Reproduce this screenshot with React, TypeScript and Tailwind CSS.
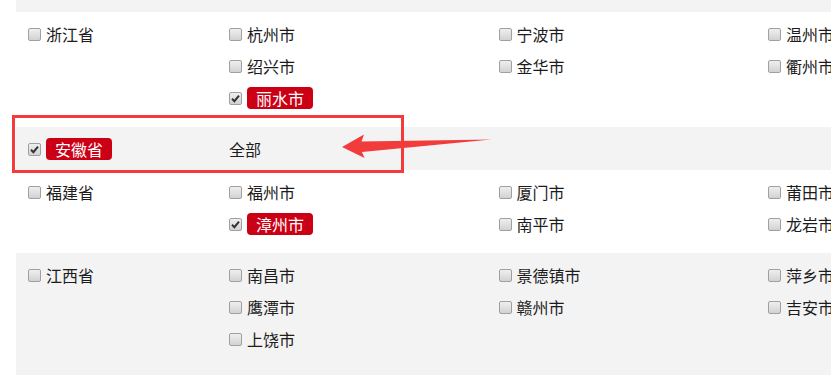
import React from 'react';

type City = { name: string; checked?: boolean };

interface ProvinceRowProps {
  name: string;
  checked?: boolean;
  cities?: City[];
  gray?: boolean;
  pad?: string;
}

const Box: React.FC<{ checked?: boolean }> = ({ checked }) => (
  <span className="w-[13px] h-[13px] shrink-0 rounded-[2px] border border-[#a0a0a0] bg-gradient-to-b from-[#efefef] to-[#d2d2d2] flex items-center justify-center">
    {checked && (
      <svg width="9" height="9" viewBox="0 0 9 9">
        <path d="M1 4.8 L3.4 7.2 L8 1.6" fill="none" stroke="#333" strokeWidth="2" />
      </svg>
    )}
  </span>
);

const Label: React.FC<{ text: string; checked?: boolean }> = ({ text, checked }) =>
  checked ? (
    <span className="h-[22px] px-[9px] rounded-[4px] bg-[#cc0015] text-white leading-[22px]">{text}</span>
  ) : (
    <span>{text}</span>
  );

const Item: React.FC<City> = ({ name, checked }) => (
  <div className="h-8 flex items-center gap-[5px]">
    <Box checked={checked} />
    <Label text={name} checked={checked} />
  </div>
);

const ProvinceRow: React.FC<ProvinceRowProps> = ({ name, checked, cities, gray, pad = 'pb-[13px]' }) => (
  <div className={`flex pl-3 pt-1.5 ${pad} ${gray ? 'bg-[#f3f3f3]' : 'bg-white'}`}>
    <div className="w-[201px] shrink-0">
      <Item name={name} checked={checked} />
    </div>
    {cities ? (
      <div className="grid grid-cols-[269.5px_269.5px_269.5px] shrink-0">
        {cities.map((c) => (
          <Item key={c.name} {...c} />
        ))}
      </div>
    ) : (
      <div className="h-8 flex items-center">全部</div>
    )}
  </div>
);

export default function App() {
  return (
    <div
      className="relative w-[831px] h-[375px] overflow-hidden bg-white text-[16px] text-[#1c1c1c]"
      style={{ fontFamily: '"Noto Sans CJK SC", "Noto Sans", sans-serif' }}
    >
      <div className="pl-4 w-[1200px]">
        <div className="h-3 bg-[#f3f3f3]" />
        <ProvinceRow
          name="浙江省"
          cities={[
            { name: '杭州市' },
            { name: '宁波市' },
            { name: '温州市' },
            { name: '绍兴市' },
            { name: '金华市' },
            { name: '衢州市' },
            { name: '丽水市', checked: true },
          ]}
        />
        <ProvinceRow name="安徽省" checked gray pad="pb-[5px]" />
        <ProvinceRow
          name="福建省"
          cities={[
            { name: '福州市' },
            { name: '厦门市' },
            { name: '莆田市' },
            { name: '漳州市', checked: true },
            { name: '南平市' },
            { name: '龙岩市' },
          ]}
        />
        <ProvinceRow
          name="江西省"
          gray
          pad="pb-5"
          cities={[
            { name: '南昌市' },
            { name: '景德镇市' },
            { name: '萍乡市' },
            { name: '鹰潭市' },
            { name: '赣州市' },
            { name: '吉安市' },
            { name: '上饶市' },
          ]}
        />
      </div>

      {/* annotation */}
      <div className="absolute left-[12px] top-[115px] w-[392px] h-[58px] border-[3px] border-[#f23b3b]" />
      <svg className="absolute left-0 top-0 pointer-events-none" width="831" height="375">
        <path d="M342 147 L364 134.5 L361.5 141.5 L491 139.5 L362 152 L364.5 158 Z" fill="#f23b3b" />
      </svg>
    </div>
  );
}
